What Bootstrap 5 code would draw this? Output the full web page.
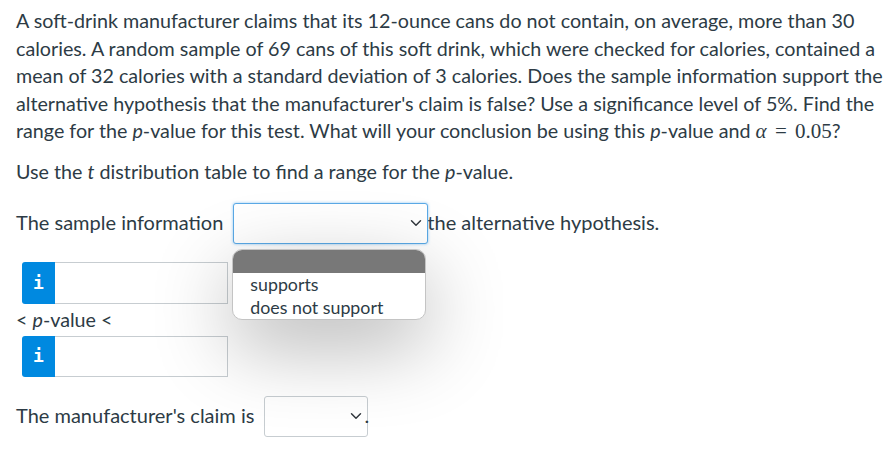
<!DOCTYPE html>
<html lang="en">
<head>
  <meta charset="UTF-8" />
  <meta name="viewport" content="width=device-width, initial-scale=1" />
  <title>Soft-drink hypothesis test</title>
  <link href="https://cdn.jsdelivr.net/npm/bootstrap@5.3.3/dist/css/bootstrap.min.css" rel="stylesheet" />
  <style>
    body { background: #fff; color: #2d3b45; font-family: Lato, "Liberation Sans", sans-serif; font-size: 19.72px; line-height: 27.6px; overflow: hidden; }
    .quiz-wrap { padding: 7px 0 0 16px; width: 896px; }
    .quiz-text { margin: 0 0 13px; white-space: nowrap; }
    .quiz-text + .quiz-text { margin-bottom: 17px; }
    .math-text { font-family: "Liberation Serif", serif; font-size: 21px; line-height: 20px; word-spacing: 3px; }
    .answer-row { font-size: 20px; }
    .answer-select { display: inline-block; height: 41px; padding: 0; border: 1px solid #c7cdd1; border-radius: 3px; background-color: #fff; background-position: right 3px center; box-shadow: none; }
    .sample-select { width: 195px; border-color: #5aa9e6; box-shadow: 0 0 3px rgba(66, 160, 235, .6); }
    .claim-select { width: 104px; margin-left: 10px; }
    .select-slot { position: relative; margin: 0 -1px 0 10px; }
    .option-menu { position: absolute; top: 46px; left: -1px; width: 194px; height: 71px; background: #fff; border: 1px solid #c4c4c4; border-radius: 10px; overflow: hidden; box-shadow: 0 25px 80px rgba(0, 0, 0, .3); z-index: 5; font-size: 17.8px; line-height: 23px; }
    .option-blank { height: 23px; background: #787878; }
    .option-row { padding-left: 17px; }
    .number-box { width: 206px; margin-left: 6px; }
    .info-tab { width: 33px; background: #0089e0; border-radius: 3px 0 0 3px; color: #fff; font-family: "DejaVu Sans Mono", monospace; font-weight: 700; font-size: 18px; }
    .number-input { flex: 1; min-width: 0; border: 1px solid #c7cdd1; border-left: 0; background: #fff; }
    .box-top { height: 42px; margin-top: 18px; }
    .box-bottom { height: 41px; margin-top: 1px; }
    .p-label { height: 31px; line-height: 31px; }
    .claim-row { margin-top: 19px; }
    .claim-dot { margin-left: -4px; position: relative; }
  </style>
</head>
<body>
  <div class="quiz-wrap">
    <p class="quiz-text">A soft-drink manufacturer claims that its 12-ounce cans do not contain, on average, more than 30<br>
      calories. A random sample of 69 cans of this soft drink, which were checked for calories, contained a<br>
      mean of 32 calories with a standard deviation of 3 calories. Does the sample information support the<br>
      alternative hypothesis that the manufacturer's claim is false? Use a significance level of 5%. Find the<br>
      range for the <i>p</i>-value for this test. What will your conclusion be using this <i>p</i>-value and <span class="math-text"><i>α</i> = 0.05</span>?</p>
    <p class="quiz-text">Use the <i>t</i> distribution table to find a range for the <i>p</i>-value.</p>

    <div class="answer-row d-flex align-items-center">
      <span>The sample information</span>
      <span class="select-slot d-inline-flex">
        <select class="form-select answer-select sample-select" aria-label="Sample information"><option></option></select>
        <div class="option-menu">
          <div class="option-blank"></div>
          <div class="option-row">supports</div>
          <div class="option-row">does not support</div>
        </div>
      </span>
      <span>the alternative hypothesis.</span>
    </div>

    <div class="number-box box-top d-flex">
      <div class="info-tab d-flex align-items-center justify-content-center">i</div>
      <div class="number-input"></div>
    </div>
    <div class="p-label">&lt; <i>p</i>-value &lt;</div>
    <div class="number-box box-bottom d-flex">
      <div class="info-tab d-flex align-items-center justify-content-center">i</div>
      <div class="number-input"></div>
    </div>

    <div class="answer-row claim-row d-flex align-items-center">
      <span>The manufacturer's claim is</span>
      <select class="form-select answer-select claim-select" aria-label="Claim"><option></option></select>
      <span class="claim-dot">.</span>
    </div>
  </div>
  <script src="https://cdn.jsdelivr.net/npm/bootstrap@5.3.3/dist/js/bootstrap.bundle.min.js"></script>
</body>
</html>
